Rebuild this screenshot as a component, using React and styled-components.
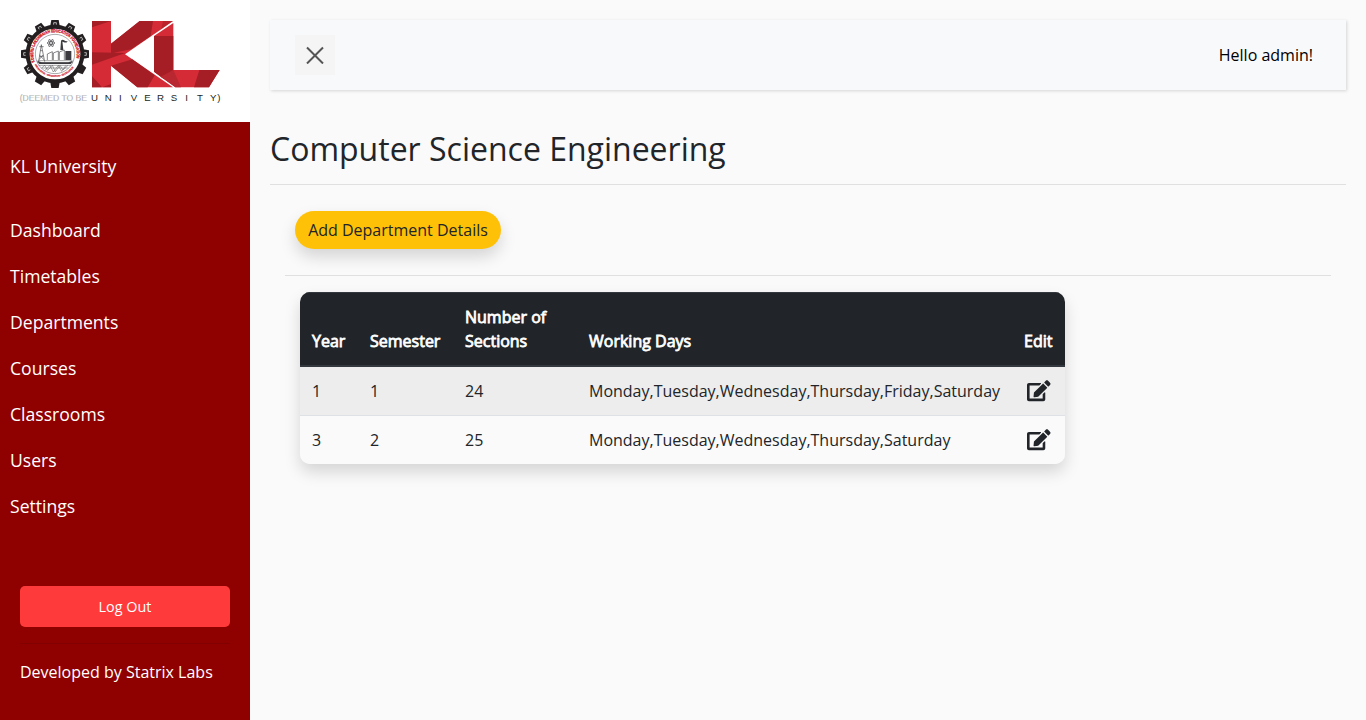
import React from 'react';
import styled, { createGlobalStyle, css } from 'styled-components';
import { FaEdit } from 'react-icons/fa';

const GlobalStyle = createGlobalStyle`
  *, *::before, *::after { box-sizing: border-box; }
  body {
    margin: 0;
    background: #fafafa;
    color: #212529;
    font: 400 16px/1.5 'Open Sans', 'Noto Sans', sans-serif;
  }
`;

const Page = styled.div`
  display: flex;
  align-items: stretch;
  height: 720px;
  overflow: hidden;
`;

const Sidebar = styled.nav`
  flex: 0 0 250px;
  background: #8f0000;
  color: #fff;
  font-weight: 400;
`;

const Brand = styled.div`
  height: 122px;
  background: #fff;
  svg { display: block; }
`;

const SideTitle = styled.div`
  padding: 31px 10px 27px;
  font-size: 17.6px;
  line-height: 27px;
`;

const Menu = styled.ul`
  list-style: none;
  margin: 0;
  padding: 0 0 51px;
`;

const MenuLink = styled.a`
  display: block;
  padding: 10px;
  font-size: 17.6px;
  line-height: 26px;
  color: #fff;
`;

const SideFooter = styled.div`
  padding: 6px 20px 0;
`;

const LogoutButton = styled.button`
  display: block;
  width: 100%;
  height: 41px;
  padding: 0;
  border: 0;
  border-radius: 5px;
  background: #ff3a3a;
  color: #fff;
  font: 400 14.4px/21px 'Open Sans', sans-serif;
`;

const Credit = styled.div`
  margin-top: 16px;
  padding-top: 16px;
  border-top: 1px solid #810000;
`;

const Content = styled.main`
  flex: 1;
  min-width: 0;
  padding: 20px;
`;

const TopBar = styled.header`
  display: flex;
  align-items: center;
  justify-content: space-between;
  height: 70px;
  margin-bottom: 40px;
  padding: 0 33px 0 25px;
  background: #f8f9fb;
  box-shadow: 1px 1px 3px rgba(0, 0, 0, 0.15);
  color: #000;
`;

const CloseButton = styled.button`
  display: grid;
  place-items: center;
  width: 40px;
  height: 40px;
  padding: 0;
  border: 0;
  background: #f5f5f5;
`;

const Heading = styled.h2`
  margin: 0 0 16px;
  font-size: 32px;
  font-weight: 400;
  line-height: 38px;
`;

const Rule = styled.hr`
  margin: 0 ${p => p.$inset || 0}px;
  border: 0;
  border-top: 1px solid #e0e0e0;
`;

const Actions = styled.div`
  padding: 26px 25px;
`;

const AddButton = styled.button`
  display: block;
  height: 38px;
  width: 206px;
  padding: 0;
  border: 0;
  border-radius: 19px;
  background: #ffc107;
  color: #212529;
  font: 400 16px/24px 'Open Sans', sans-serif;
  white-space: nowrap;
  box-shadow: 0 8px 16px rgba(0, 0, 0, 0.15);
`;

const Table = styled.table`
  table-layout: fixed;
  width: 765px;
  margin: 16px 0 0 30px;
  border-spacing: 0;
  border-radius: 10px;
  overflow: hidden;
  box-shadow: 0 8px 16px rgba(0, 0, 0, 0.15);
`;

const cell = css`
  padding: 0 12px;
  text-align: left;
  white-space: nowrap;
`;

const HeadCell = styled.th`
  ${cell}
  width: ${p => p.$width}px;
  height: 75px;
  padding-bottom: 12px;
  vertical-align: bottom;
  white-space: ${p => (p.$wrap ? 'normal' : 'nowrap')};
  background: #212529;
  border-top: 1px solid #32383e;
  border-bottom: 2px solid #32383e;
  color: #fff;
  font-weight: 400;
  -webkit-text-stroke: 0.8px #fff;
`;

const Row = styled.tr`
  background: ${p => (p.$striped ? '#ededed' : '#fafafa')};
`;

const Cell = styled.td`
  ${cell}
  height: ${p => (p.$line ? 49 : 48)}px;
  border-top: ${p => (p.$line ? '1px solid #dee2e6' : '0')};
  svg { display: block; margin-left: 3px; }
`;

const COLUMNS = [
  ['Year', 58],
  ['Semester', 95],
  ['Number of Sections', 124],
  ['Working Days', 435],
  ['Edit', 53],
];

const ROWS = [
  ['1', '1', '24', 'Monday,Tuesday,Wednesday,Thursday,Friday,Saturday'],
  ['3', '2', '25', 'Monday,Tuesday,Wednesday,Thursday,Saturday'],
];

const LINKS = ['Dashboard', 'Timetables', 'Departments', 'Courses', 'Classrooms', 'Users', 'Settings'];

const TEETH = Array.from({ length: 12 }, (_, i) => i * 30);

function Logo() {
  return (
    <svg width="250" height="122" viewBox="0 0 750 366">
      <g transform="translate(165 162)">
        {TEETH.map(a => (
          <path key={a} transform={`rotate(${a})`} fill="#231f20" d="M-15-80L-11-102H11L15-80Z" />
        ))}
        <circle r="82" fill="#fff" stroke="#231f20" strokeWidth="12" />
        {TEETH.filter(a => a <= 90 || a >= 240).map(a => (
          <path key={a} transform={`rotate(${a})`} fill="none" stroke="#ccc" strokeWidth="2.5" d="M-4-88V-94H4V-88" />
        ))}
        <path id="ring-top" d="M-61 24A65.500 65.500 0 1 1 61 24" fill="none" />
        <path id="ring-bottom" d="M-61 32A69 69 0 0 0 61 32" fill="none" />
        <text fill="#d2232a" stroke="#d2232a" strokeWidth="1" fontFamily="Liberation Sans" fontWeight="700" fontSize="13">
          <textPath href="#ring-top" textLength="242" lengthAdjust="spacingAndGlyphs">KONERU LAKSHMAIAH EDUCATION FOUNDATION</textPath>
        </text>
        <text fill="#d2232a" stroke="#d2232a" strokeWidth=".5" fontFamily="Liberation Sans" fontWeight="700" fontSize="7">
          <textPath href="#ring-bottom" textLength="140" lengthAdjust="spacingAndGlyphs">KNOWLEDGE • INNOVATION • EXCELLENCE</textPath>
        </text>
        <circle r="59" fill="#fff" stroke="#55565a" strokeWidth="1.5" />
        <g fill="none" stroke="#4c4c50" strokeWidth="2">
          <path d="M-49 23L-41-28L-31 23M-46 7H-35M-48 17L-36 3M-47 3L-33 17M-44-10H-38M-47-22H-34" />
          <path d="M-23 18V0L-8-7V18M-5 18V-3L10-9V18M13 18V-6L28-12V18" />
          <path d="M-52 20H52M-54 26H54M-40 42H40M-49 34H49M-40 42L-31 34L-22 49L-8 34L1 53L15 34L24 48L39 34M-30 49L-15 34L-5 54L10 34L20 52L33 34" strokeWidth="1.500" />
          <ellipse cx="-12" cy="-33" rx="12" ry="4" />
          <ellipse cx="-12" cy="-33" rx="12" ry="4" transform="rotate(60 -12 -33)" />
          <ellipse cx="-12" cy="-33" rx="12" ry="4" transform="rotate(120 -12 -33)" />
        </g>
        <path fill="#3c3c40" d="M16-12L18-39H22L25-12ZM18-40C25-48 32-33 38-40L36-35C29-32 24-38 18-36ZM31-9H49V18H31ZM-54 20L-47 30H47L54 20L40 25H-40Z" />
      </g>
      <path fill="#d52b36" d="M276 63H333V131L419 63H519L375 163L519 262H412L333 197V262H276Z" />
      <path fill="#a51e25" d="M276 63H333L276 82ZM276 157L376 159L333 174L276 194ZM419 63H459L452 108L393 148L333 160V131ZM333 197L397 178L464 226L443 262H412ZM276 228L306 262H276ZM306 262L333 252V262Z" />
      <path fill="#a51e25" d="M489 63H519L464 102L484 86Z" opacity=".55" />
      <path fill="#d52b36" d="M462 108L520 69V210H659L627 262H526L462 215Z" />
      <path fill="#a51e25" d="M462 108L520 108V210L490 236L462 215ZM598 210H659L627 262H582Z" />
      <path fill="#b92730" d="M482 230L520 210L543 262H526Z" />
      <g fontFamily="Liberation Sans" fontSize="29">
        <text x="59" y="303" textLength="202" lengthAdjust="spacingAndGlyphs" fill="#777" stroke="#fff" strokeWidth=".8">(DEEMED TO BE</text>
        <text x="273 314 357 392 433 471 512 556 591 630 652" y="303" fill="#231f20">UNIVERSITY)</text>
      </g>
    </svg>
  );
}

function CloseIcon() {
  return (
    <svg width="18" height="18" viewBox="0 0 18 18" fill="none" stroke="#555" strokeWidth="2">
      <path d="M1 1.500L17 17.500M17 1.500L1 17.500" />
    </svg>
  );
}

export default function App() {
  return (
    <>
      <GlobalStyle />
      <Page>
        <Sidebar>
          <Brand><Logo /></Brand>
          <SideTitle>KL University</SideTitle>
          <Menu>
            {LINKS.map(l => <li key={l}><MenuLink>{l}</MenuLink></li>)}
          </Menu>
          <SideFooter>
            <LogoutButton>Log Out</LogoutButton>
            <Credit>Developed by Statrix Labs</Credit>
          </SideFooter>
        </Sidebar>
        <Content>
          <TopBar>
            <CloseButton aria-label="Close menu"><CloseIcon /></CloseButton>
            <span>Hello admin!</span>
          </TopBar>
          <Heading>Computer Science Engineering</Heading>
          <Rule />
          <Actions><AddButton>Add Department Details</AddButton></Actions>
          <Rule $inset={15} />
          <Table>
            <thead>
              <tr>
                {COLUMNS.map(([name, width]) => (
                  <HeadCell key={name} $width={width} $wrap={name.startsWith('Number')}>{name}</HeadCell>
                ))}
              </tr>
            </thead>
            <tbody>
              {ROWS.map((row, i) => (
                <Row key={row[0]} $striped={i === 0}>
                  {row.map((v, j) => <Cell key={j} $line={i > 0}>{v}</Cell>)}
                  <Cell $line={i > 0}><FaEdit size={23.500} /></Cell>
                </Row>
              ))}
            </tbody>
          </Table>
        </Content>
      </Page>
    </>
  );
}
